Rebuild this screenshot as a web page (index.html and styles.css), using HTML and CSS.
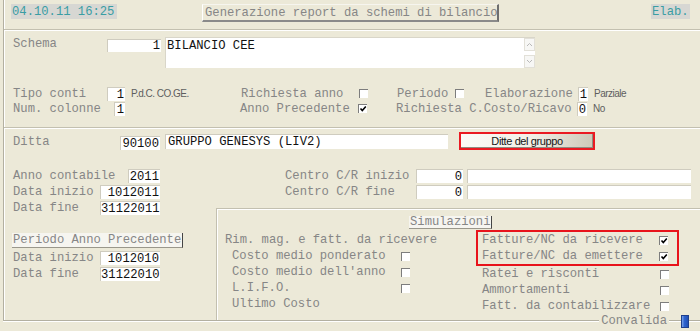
FILE: index.html
```html
<!DOCTYPE html>
<html>
<head>
<meta charset="utf-8">
<link rel="stylesheet" href="styles.css">
</head>
<body>
<div class="screen">
  <div class="hdr">
    <span class="stamp">04.10.11 16:25</span>
    <span class="title">Generazione report da schemi di bilancio</span>
    <span class="stamp elab">Elab.</span>
  </div>
  <div class="sep"></div>

  <section class="s1">
    <div class="row-schema">
      <span class="lbl schema-lbl">Schema</span>
      <span class="fld num schema-fld">1</span>
      <div class="memo">
        <span class="memo-text">BILANCIO CEE</span>
        <div class="scroll">
          <span class="arr"><svg width="9" height="7" viewBox="0 0 9 7"><path d="M2 5 L4.5 2.5 L7 5" fill="none" stroke="#b8b8b8" stroke-width="1"/></svg></span>
          <span class="arr"><svg width="9" height="7" viewBox="0 0 9 7"><path d="M2 2 L4.5 4.5 L7 2" fill="none" stroke="#b8b8b8" stroke-width="1"/></svg></span>
        </div>
      </div>
    </div>
    <div class="opts">
      <div class="orow">
        <span class="lbl w94">Tipo conti</span>
        <span class="fld num w18">1</span>
        <span class="small w110">P.d.C. CO.GE.</span>
        <span class="lbl w118">Richiesta anno</span>
        <span class="chk"></span>
        <span class="sp29"></span>
        <span class="lbl w58">Periodo</span>
        <span class="chk"></span>
        <span class="sp21"></span>
        <span class="lbl w93">Elaborazione</span>
        <span class="fld num w10">1</span>
        <span class="small">Parziale</span>
      </div>
      <div class="orow">
        <span class="lbl w101">Num. colonne</span>
        <span class="fld num w11">1</span>
        <span class="sp115"></span>
        <span class="lbl w118">Anno Precedente</span>
        <span class="chk on"><svg width="8" height="8" viewBox="0 0 8 8"><path d="M1.5 3.5 L3.3 5.5 L6.8 1.5" fill="none" stroke="#000" stroke-width="1.6"/></svg></span>
        <span class="sp29"></span>
        <span class="lbl w181">Richiesta C.Costo/Ricavo</span>
        <span class="fld num w10">0</span>
        <span class="small">No</span>
      </div>
    </div>
  </section>
  <div class="sep"></div>

  <section class="s2">
    <div class="ditta">
      <span class="lbl w107 low">Ditta</span>
      <span class="fld num w40 dfld">90100</span>
      <span class="fld txt w283">GRUPPO GENESYS (LIV2)</span>
      <span class="dbtn">Ditte del gruppo</span>
    </div>

    <div class="grid2">
      <div class="lcol">
        <div class="lrow"><span class="lbl w115">Anno contabile</span><span class="fld num w32">2011</span></div>
        <div class="lrow"><span class="lbl w87">Data inizio</span><span class="fld num w60">1012011</span></div>
        <div class="lrow"><span class="lbl w87">Data fine</span><span class="fld num w60">31122011</span></div>
        <span class="pbtn">Periodo Anno Precedente</span>
        <div class="lrow"><span class="lbl w87">Data inizio</span><span class="fld num w60">1012010</span></div>
        <div class="lrow"><span class="lbl w87">Data fine</span><span class="fld num w60">31122010</span></div>
      </div>

      <div class="rcol">
        <div class="crow"><span class="lbl w131">Centro C/R inizio</span><span class="fld num w47">0</span><span class="fld txt w224"></span></div>
        <div class="crow"><span class="lbl w131">Centro C/R fine</span><span class="fld num w47">0</span><span class="fld txt w224"></span></div>

        <div class="panel">
          <span class="sbtn">Simulazioni</span>
          <div class="pgrid">
            <div class="pleft">
              <div class="prow first"><span class="lbl">Rim. mag. e fatt. da ricevere</span></div>
              <div class="prow ind"><span class="lbl w169">Costo medio ponderato</span><span class="chk"></span></div>
              <div class="prow ind"><span class="lbl w169">Costo medio dell'anno</span><span class="chk"></span></div>
              <div class="prow ind"><span class="lbl w169">L.I.F.O.</span><span class="chk"></span></div>
              <div class="prow ind"><span class="lbl w169">Ultimo Costo</span></div>
            </div>
            <div class="pright">
              <div class="redbox">
                <div class="prow"><span class="lbl grow">Fatture/NC da ricevere</span><span class="chk on"><svg width="8" height="8" viewBox="0 0 8 8"><path d="M1.5 3.5 L3.3 5.5 L6.8 1.5" fill="none" stroke="#000" stroke-width="1.6"/></svg></span></div>
                <div class="prow"><span class="lbl grow">Fatture/NC da emettere</span><span class="chk on"><svg width="8" height="8" viewBox="0 0 8 8"><path d="M1.5 3.5 L3.3 5.5 L6.8 1.5" fill="none" stroke="#000" stroke-width="1.6"/></svg></span></div>
              </div>
              <div class="prow out"><span class="lbl grow">Ratei e risconti</span><span class="chk"></span></div>
              <div class="prow out"><span class="lbl grow">Ammortamenti</span><span class="chk"></span></div>
              <div class="prow out"><span class="lbl grow">Fatt. da contabilizzare</span><span class="chk"></span></div>
            </div>
          </div>
        </div>
      </div>
    </div>
  </section>
</div>
<div class="foot">
  <span class="fl grow"></span>
  <span class="lbl conv">Convalida</span>
  <span class="fl w12"></span>
  <span class="blue"></span>
  <span class="fl w11"></span>
</div>
</body>
</html>
```

FILE: styles.css
```css
* { box-sizing: border-box; }

html, body {
  margin: 0;
  padding: 0;
  background: #ece9d8;
}

body {
  width: 700px;
  height: 331px;
  overflow: hidden;
  font-family: "Liberation Mono", "DejaVu Sans Mono", monospace;
  font-size: 12.2px;
  color: #868686;
}

.screen {
  margin-left: 3px;
  width: 697px;
  border-left: 1px solid #b3b0a1;
  box-shadow: inset 1px 0 0 #ffffff;
}

/* header */
.hdr {
  height: 29px;
  display: flex;
  align-items: flex-start;
  padding: 4px 0 0 7px;
}
.stamp {
  display: block;
  width: 106px;
  height: 15px;
  line-height: 16px;
  padding-left: 1px;
  background: #d7d7d3;
  color: #3a9da3;
  white-space: nowrap;
}
.title {
  display: block;
  margin-left: 85px;
  width: 297px;
  height: 18px;
  line-height: 17px;
  padding-left: 2px;
  border-left: 1px solid #ffffff;
  border-top: 1px solid #f6f5ef;
  border-right: 2px solid #6e6e6e;
  border-bottom: 2px solid #8a8a8a;
  white-space: nowrap;
}
.elab {
  margin-left: 152px;
  width: 39px;
  padding-left: 1px;
}

.sep {
  height: 2px;
  border-top: 1px solid #c3c0b0;
  border-bottom: 1px solid #ffffff;
}

/* generic */
.lbl {
  display: block;
  white-space: nowrap;
  line-height: 14px;
  flex: none;
}
.low { padding-top: 2px; }
.grow { flex: 1 1 auto; }
.fld {
  display: block;
  flex: none;
  height: 14px;
  line-height: 14px;
  background: #ffffff;
  border-top: 1px solid #cfccbf;
  border-left: 1px solid #cfccbf;
  color: #111111;
  white-space: nowrap;
  overflow: hidden;
}
.fld.num { text-align: right; padding-right: 1px; }
.fld.txt { padding-left: 2px; }
.small {
  display: block;
  flex: none;
  font-family: "Liberation Sans", Arial, sans-serif;
  font-size: 10px;
  letter-spacing: -0.5px;
  color: #5e5e5e;
  margin-left: 6px;
  white-space: nowrap;
}
.chk {
  display: flex;
  flex: none;
  align-items: center;
  justify-content: center;
  width: 9px;
  height: 9px;
  background: #ffffff;
  border-top: 1px solid #7d7d7d;
  border-left: 1px solid #7d7d7d;
}
.chk svg { display: block; }

/* widths */
.w10 { width: 10px; }
.w11 { width: 11px; }
.w12 { width: 12px; }
.w18 { width: 18px; }
.w32 { width: 32px; }
.w40 { width: 40px; }
.w47 { width: 47px; }
.w58 { width: 58px; }
.w60 { width: 60px; }
.w87 { width: 87px; }
.w93 { width: 93px; }
.w94 { width: 94px; }
.w101 { width: 101px; }
.w107 { width: 107px; }
.w110 { width: 110px; }
.w115 { width: 115px; }
.w118 { width: 118px; }
.w131 { width: 131px; }
.w169 { width: 169px; }
.w181 { width: 181px; }
.w224 { width: 224px; }
.w283 { width: 283px; }
.sp21 { width: 21px; flex: none; }
.sp29 { width: 29px; flex: none; }
.sp115 { width: 115px; flex: none; }

/* section 1 */
.s1 {
  height: 96px;
  padding-top: 6px;
}
.row-schema {
  display: flex;
  align-items: flex-start;
  padding-left: 9px;
}
.schema-lbl { width: 94px; }
.schema-fld {
  width: 54px;
  height: 13px;
  line-height: 13px;
  margin-top: 2px;
}
.memo {
  display: flex;
  margin-left: 4px;
  width: 370px;
  height: 31px;
  background: #ffffff;
  border-top: 1px solid #d9d6c9;
  border-left: 1px solid #d9d6c9;
}
.memo-text {
  flex: 1;
  padding: 1px 0 0 1px;
  line-height: 14px;
  color: #111111;
}
.scroll {
  width: 11px;
  display: flex;
  flex-direction: column;
  justify-content: space-between;
}
.arr {
  display: flex;
  align-items: center;
  justify-content: center;
  height: 13px;
  border: 1px solid #e2e0d8;
  background: #f7f7f5;
}
.opts { margin-top: 18px; }
.orow {
  display: flex;
  align-items: center;
  height: 15px;
  padding-left: 9px;
}

/* section 2 */
.ditta {
  display: flex;
  align-items: center;
  height: 18px;
  margin-top: 3px;
  padding-left: 9px;
}
.dfld { margin-top: 3px; }
.ditta .w283 { margin-left: 5px; height: 15px; }
.dbtn {
  display: block;
  margin-left: 11px;
  width: 136px;
  height: 18px;
  line-height: 14px;
  text-align: center;
  border: 2px solid #ea1a22;
  background: linear-gradient(to right, #fbfbf8 0%, #f1efe6 55%, #cdc9b8 100%);
  box-shadow: inset -1px -1px 0 #8f8c80;
  font-family: "Liberation Sans", Arial, sans-serif;
  font-size: 11px;
  letter-spacing: -0.4px;
  color: #151515;
}

.grid2 {
  display: grid;
  grid-template-columns: 212px 1fr;
  margin-top: 18px;
}
.lcol { padding-left: 9px; }
.lrow {
  display: flex;
  align-items: center;
  height: 16px;
}
.pbtn {
  display: block;
  margin: 17px 0 2px -1px;
  width: 171px;
  height: 15px;
  line-height: 15px;
  padding-left: 1px;
  background: #f6f5f0;
  border-right: 1px solid #444444;
  border-bottom: 1px solid #9a978b;
  white-space: nowrap;
}

.crow {
  display: flex;
  align-items: center;
  height: 16px;
  padding-left: 69px;
}
.crow .w224 { margin-left: 4px; }

.panel {
  margin-top: 8px;
  height: 113px;
  border-top: 1px solid #c3c0b0;
  border-left: 1px solid #c3c0b0;
  box-shadow: inset 1px 1px 0 #ffffff;
  padding-top: 7px;
}
.sbtn {
  display: block;
  margin-left: 192px;
  width: 83px;
  height: 13px;
  line-height: 13px;
  padding-left: 1px;
  background: #f6f5f0;
  border-right: 1px solid #444444;
  border-bottom: 1px solid #9a978b;
  white-space: nowrap;
  overflow: hidden;
}
.pgrid {
  display: grid;
  grid-template-columns: 259px 203px;
  margin-top: 1px;
}
.pleft { padding-top: 2px; }
.prow {
  display: flex;
  align-items: center;
  height: 16px;
}
.prow.first { padding-left: 8px; }
.prow.ind { padding-left: 15px; }
.redbox {
  border: 2px solid #e8131b;
  padding: 0 9px 0 4px;
}
.prow.out {
  padding: 0 10px 0 6px;
}

/* footer */
.foot {
  display: flex;
  align-items: center;
  height: 14px;
  margin: -7px 0 0 3px;
  width: 697px;
  position: relative;
}
.fl {
  display: block;
  flex: none;
  height: 2px;
  border-top: 1px solid #b3b0a1;
  border-bottom: 1px solid #ffffff;
}
.fl.grow { flex: 1 1 auto; }
.conv { padding: 0 2px; }
.blue {
  display: block;
  flex: none;
  width: 8px;
  height: 13px;
  background: linear-gradient(to right, #7aa2ea 0%, #2e63cf 40%, #2250b4 100%);
  border: 1px solid #1f3f8c;
}
```
